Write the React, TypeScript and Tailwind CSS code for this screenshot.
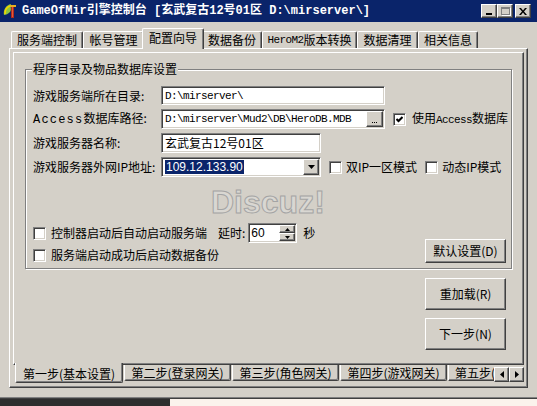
const raised =
  "border border-t-white border-l-white border-r-[#404040] border-b-[#404040] shadow-[inset_-1px_-1px_0_#808080] bg-[#d4d0c8]";
const sunken =
  "border border-t-[#808080] border-l-[#808080] border-r-white border-b-white shadow-[inset_1px_1px_0_#404040,inset_-1px_-1px_0_#d4d0c8] bg-white";
const mono = "font-['Liberation_Mono',monospace]";

const topTabs = [
  { label: "服务端控制", cls: "w-[72px]" },
  { label: "帐号管理", cls: "w-[61px]" },
  { label: "配置向导", cls: "w-[62px]", active: true },
  { label: "数据备份", cls: "w-[60px]" },
  { label: "HeroM2版本转换", cls: "w-[95px]" },
  { label: "数据清理", cls: "w-[61px]" },
  { label: "相关信息", cls: "w-[60px]" },
];

const stepTabs = ["第二步(登录网关)", "第三步(角色网关)", "第四步(游戏网关)"];

function Check({ on }: { on?: boolean }) {
  return (
    <span className={`w-[13px] h-[13px] shrink-0 flex items-center justify-center ${sunken}`}>
      {on && (
        <svg width="7" height="7" viewBox="0 0 7 7">
          <polyline points="0.5,3 2.5,5 6.5,1" fill="none" stroke="#000" strokeWidth="2" />
        </svg>
      )}
    </span>
  );
}

function AppIcon() {
  return (
    <svg width="16" height="16" viewBox="0 0 16 16" className="shrink-0">
      <path d="M2 12 C1 7 4 2 9 1 C8 4 10 6 8 9 C6 11 4 12 2 12 Z" fill="#8cc63f" />
      <path d="M3 11 C3 7 5 4 8 3" stroke="#f5d200" strokeWidth="1.5" fill="none" />
      <rect x="9" y="2" width="3" height="13" fill="#b02a1e" />
      <rect x="8" y="2" width="6" height="2" fill="#e8b020" />
      <rect x="10" y="4" width="1" height="10" fill="#e05a3a" />
    </svg>
  );
}

function TitleBar() {
  return (
    <div className="h-[22px] shrink-0 bg-[#0a246a] flex items-center pl-[2px] pr-[6px]">
      <AppIcon />
      <span className="ml-[4px] text-white font-bold text-[12px] leading-[14px] whitespace-pre font-['Liberation_Mono','Noto_Sans_CJK_SC',monospace]">
        GameOfMir引擎控制台 [玄武复古12号01区 D:\mirserver\]
      </span>
      <div className="ml-auto flex items-center">
        <div className={`w-[16px] h-[14px] flex items-end justify-center pb-[2px] ${raised}`}>
          <span className="w-[6px] h-[2px] bg-black" />
        </div>
        <div className={`w-[16px] h-[14px] flex items-center justify-center ${raised}`}>
          <span className="w-[9px] h-[8px] border border-[#808080] border-t-2 shadow-[1px_1px_0_#fff]" />
        </div>
        <div className={`ml-[2px] w-[16px] h-[14px] flex items-center justify-center ${raised}`}>
          <svg width="8" height="7" viewBox="0 0 8 7">
            <path d="M0 0h2l2 2.5L6 0h2L5 3.5 8 7H6L4 4.5 2 7H0l3-3.5z" fill="#000" />
          </svg>
        </div>
      </div>
    </div>
  );
}

function Field({ w, children }: { w: string; children: React.ReactNode }) {
  return (
    <div className={`${w} h-full flex items-center pl-[3px] relative ${sunken}`}>{children}</div>
  );
}

export default function App() {
  return (
    <div className="w-[537px] h-[406px] overflow-hidden bg-[#d4d0c8] text-black text-[12px] leading-[14px] font-['Noto_Sans_CJK_SC','Liberation_Sans',sans-serif] flex flex-col">
      <TitleBar />

      <div className="h-[377px] shrink-0 pl-[9px] flex flex-col border-b border-b-[#404040] shadow-[inset_0_-1px_0_#808080]">
        {/* top tabs */}
        <div className="mt-[6px] h-[20px] flex items-end pl-[2px]">
          {topTabs.map((t) =>
            t.active ? (
              <div
                key={t.label}
                className={`${t.cls} relative z-10 -mx-[2px] mb-[-1px] h-[21px] pb-[3px] flex items-center justify-center bg-[#d4d0c8] border border-b-0 border-t-white border-l-white border-r-[#404040] shadow-[inset_-1px_0_0_#808080] rounded-t-[2px]`}
              >
                {t.label}
              </div>
            ) : (
              <div
                key={t.label}
                className={`${t.cls} h-[17px] flex items-center justify-center border border-b-0 border-t-white border-l-white border-r-[#404040] shadow-[inset_-1px_0_0_#808080] rounded-t-[2px] whitespace-nowrap`}
              >
                {t.label.startsWith("HeroM2") ? (
                  <>
                    <span className={`${mono} text-[11px] tracking-[-0.6px]`}>HeroM2</span>版本转换
                  </>
                ) : (
                  t.label
                )}
              </div>
            )
          )}
        </div>

        {/* outer page */}
        <div className="w-[519px] h-[340px] pt-[3px] pl-[3px] border border-t-white border-l-white border-r-[#404040] border-b-[#404040] shadow-[inset_-1px_-1px_0_#808080]">
          <div className="w-[511px] h-[313px] pt-[16px] pl-[11px] border border-t-white border-l-white border-r-[#404040] border-b-[#404040] shadow-[inset_-1px_-1px_0_#808080]">
            {/* group box */}
            <div className="relative w-[487px] h-[200px] border border-[#808080] shadow-[inset_1px_1px_0_#fff,1px_1px_0_#fff] pl-[7px]">
              <span className="absolute left-[6px] top-[-8px] px-[1px] bg-[#d4d0c8]">程序目录及物品数据库设置</span>

              <div
                className="absolute left-[185px] top-[116px] text-[32px] leading-[32px] font-bold font-['Liberation_Sans',sans-serif] text-[#d9d7d2] [-webkit-text-stroke:1px_#a4a4a4] select-none"
              >
                Discuz!
              </div>

              <div className="pt-[16px] flex flex-col gap-[4px]">
                <div className="h-[19px] flex items-center">
                  <span className="w-[128px] shrink-0">游戏服务端所在目录:</span>
                  <Field w="w-[224px]">
                    <span className={`${mono} text-[11px] tracking-[-0.6px]`}>D:\mirserver\</span>
                  </Field>
                </div>

                <div className="h-[20px] flex items-center">
                  <span className="w-[128px] shrink-0">
                    <span className={`${mono} text-[12px] tracking-[1.2px]`}>Access</span>数据库路径:
                  </span>
                  <Field w="w-[224px]">
                    <span className={`${mono} text-[11px] tracking-[-0.6px]`}>D:\mirserver\Mud2\DB\HeroDB.MDB</span>
                    <span
                      className={`absolute right-[1px] top-[1px] w-[17px] h-[16px] flex items-end justify-center pb-[3px] ${raised}`}
                    >
                      <span className="flex gap-[1px]">
                        <span className="w-[1px] h-[1px] bg-black" />
                        <span className="w-[1px] h-[1px] bg-black" />
                        <span className="w-[1px] h-[1px] bg-black" />
                      </span>
                    </span>
                  </Field>
                  <span className="ml-[8px]">
                    <Check on />
                  </span>
                  <span className="ml-[6px] whitespace-nowrap">
                    使用<span className={`${mono} text-[11px] tracking-[-0.6px]`}>Access</span>数据库
                  </span>
                </div>

                <div className="h-[20px] flex items-center">
                  <span className="w-[128px] shrink-0">游戏服务器名称:</span>
                  <Field w="w-[160px]">玄武复古12号01区</Field>
                </div>

                <div className="h-[20px] flex items-center">
                  <span className="w-[128px] shrink-0">游戏服务器外网IP地址:</span>
                  <Field w="w-[160px]">
                    <span className="bg-[#0a246a] text-white px-[1px] leading-[14px] font-['Liberation_Sans',sans-serif]">
                      109.12.133.90
                    </span>
                    <span
                      className={`absolute right-[1px] top-[1px] w-[16px] h-[16px] flex items-center justify-center ${raised}`}
                    >
                      <svg width="7" height="4" viewBox="0 0 7 4">
                        <path d="M0 0h7L3.5 4z" fill="#000" />
                      </svg>
                    </span>
                  </Field>
                  <span className="ml-[8px]">
                    <Check />
                  </span>
                  <span className="ml-[4px] whitespace-nowrap">双IP一区模式</span>
                  <span className="ml-[8px]">
                    <Check />
                  </span>
                  <span className="ml-[4px] whitespace-nowrap">动态IP模式</span>
                </div>
              </div>

              <div className="mt-[46px] flex items-end pr-[5px]">
                <div className="flex flex-col">
                  <div className="h-[20px] flex items-center">
                    <Check />
                    <span className="ml-[5px]">控制器启动后自动启动服务端</span>
                    <span className="ml-[11px]">延时:</span>
                    <div className={`ml-[3px] w-[49px] h-[20px] relative flex items-center pl-[2px] ${sunken}`}>
                      <span className="font-['Liberation_Sans',sans-serif]">60</span>
                      <span className="absolute right-[1px] top-[1px] w-[16px] h-[16px] flex flex-col">
                        <span className={`h-[8px] flex items-center justify-center ${raised}`}>
                          <svg width="5" height="3" viewBox="0 0 5 3">
                            <path d="M0 3h5L2.5 0z" fill="#000" />
                          </svg>
                        </span>
                        <span className={`h-[8px] flex items-center justify-center ${raised}`}>
                          <svg width="5" height="3" viewBox="0 0 5 3">
                            <path d="M0 0h5L2.5 3z" fill="#000" />
                          </svg>
                        </span>
                      </span>
                    </div>
                    <span className="ml-[6px]">秒</span>
                  </div>
                  <div className="mt-[4px] h-[16px] flex items-center">
                    <Check />
                    <span className="ml-[5px]">服务端启动成功后启动数据备份</span>
                  </div>
                </div>
                <button className={`ml-auto w-[81px] h-[24px] flex items-center justify-center ${raised}`}>
                  默认设置(D)
                </button>
              </div>
            </div>

            {/* action buttons */}
            <div className="ml-[400px] mt-[9px] flex flex-col gap-[8px]">
              <button className={`w-[81px] h-[32px] flex items-center justify-center ${raised}`}>重加载(R)</button>
              <button className={`w-[81px] h-[32px] flex items-center justify-center ${raised}`}>下一步(N)</button>
            </div>
          </div>

          {/* bottom step tabs */}
          <div className="relative w-[511px] h-[18px] flex items-start overflow-x-clip">
            <div className="relative z-10 mt-[-2px] ml-[2px] w-[108px] h-[20px] shrink-0 flex items-center justify-center pt-[3px] bg-[#d4d0c8] border border-t-0 border-l-white border-r-[#404040] border-b-[#404040] shadow-[inset_-1px_-1px_0_#808080] rounded-b-[2px]">
              第一步(基本设置)
            </div>
            {stepTabs.map((s) => (
              <div
                key={s}
                className="ml-[1px] w-[107px] h-[16px] shrink-0 flex items-center justify-center border border-t-0 border-l-white border-r-[#404040] border-b-[#404040] shadow-[inset_-1px_-1px_0_#808080] rounded-b-[2px]"
              >
                {s}
              </div>
            ))}
            <div className="ml-[1px] w-[107px] h-[16px] shrink-0 flex items-center pl-[6px] border border-t-0 border-l-white border-r-[#404040] border-b-[#404040] shadow-[inset_-1px_-1px_0_#808080]">
              第五步(基本
            </div>
            <div className="absolute right-0 top-[2px] flex">
              <span className={`w-[15px] h-[15px] flex items-center justify-center ${raised}`}>
                <svg width="4" height="7" viewBox="0 0 4 7">
                  <path d="M4 0v7L0 3.5z" fill="#000" />
                </svg>
              </span>
              <span className={`w-[15px] h-[15px] flex items-center justify-center ${raised}`}>
                <svg width="4" height="7" viewBox="0 0 4 7">
                  <path d="M0 0v7l4-3.5z" fill="#000" />
                </svg>
              </span>
            </div>
          </div>
        </div>
      </div>

      <div className="flex flex-1">
        <div className="w-[170px] bg-[#2e2e2e]" />
        <div className="flex-1 bg-[#fbf3ec]" />
      </div>
    </div>
  );
}
